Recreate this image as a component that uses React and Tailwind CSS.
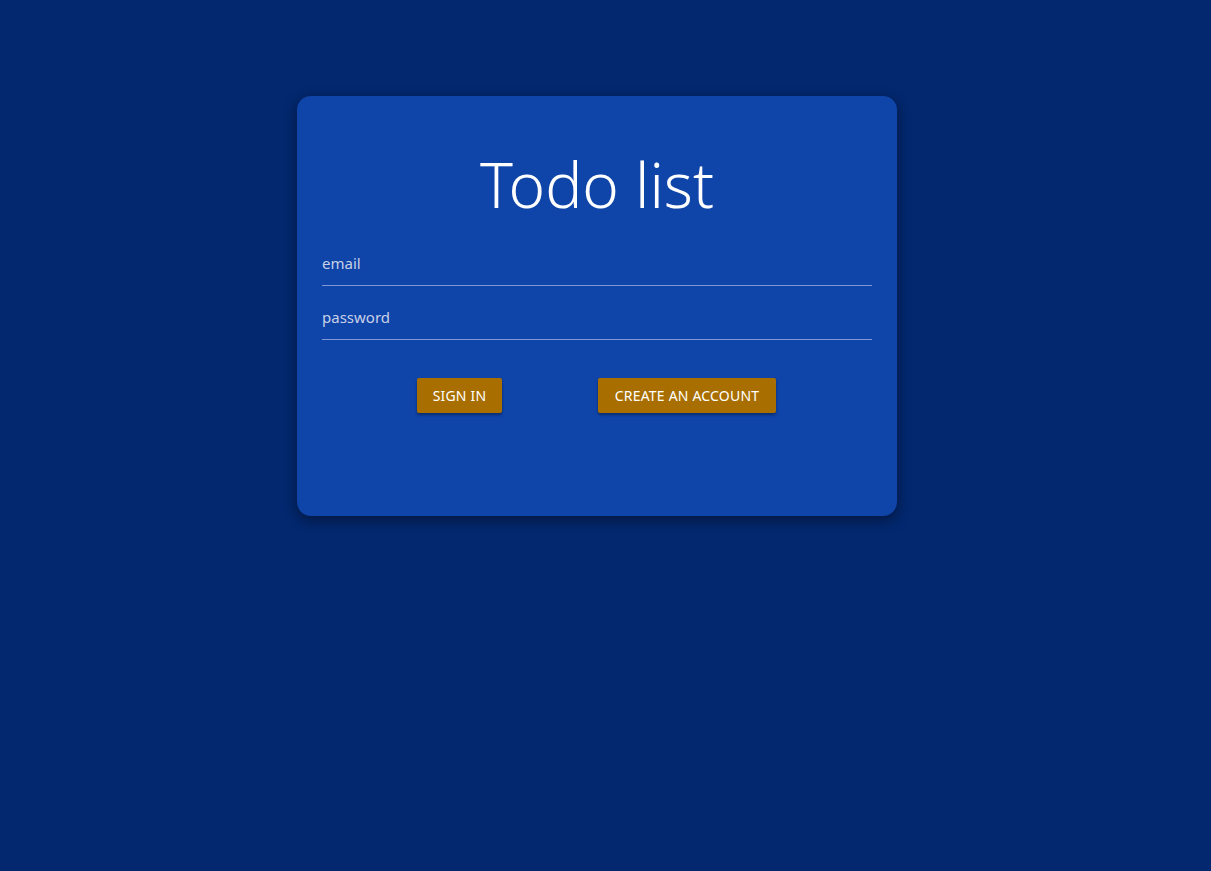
export default function App() {
  return (
    <div className="min-h-screen w-full bg-[#03286f] pr-[17px] pt-[96px]" style={{ fontFamily: '"Noto Sans", "Open Sans", sans-serif' }}>
      <div className="mx-auto flex h-[420px] w-[600px] flex-col rounded-[14px] bg-[#0f44a9] px-[25px] shadow-[0_4px_14px_rgba(0,0,0,0.45)]">
        <h1 className="mt-[48px] text-center text-[62px] font-light leading-[80px] text-white">Todo list</h1>
        <div className="mt-[15px] flex h-[47px] items-center border-b border-[#8099d6] pt-[2px]">
          <span className="text-[15px] text-[#c9d1e6]">email</span>
        </div>
        <div className="mt-[7px] flex h-[47px] items-center border-b border-[#8099d6] pt-[2px]">
          <span className="text-[15px] text-[#c9d1e6]">password</span>
        </div>
        <div className="mt-[38px] flex justify-center gap-[96px] pr-[1px]">
          <button className="h-[35px] w-[85px] rounded-[2px] bg-[#a86f00] text-[14px] uppercase tracking-[0.2px] text-white shadow-[0_2px_3px_rgba(0,0,0,0.35)]">Sign in</button>
          <button className="h-[35px] w-[178px] rounded-[2px] bg-[#a86f00] text-[14px] uppercase tracking-[0.2px] text-white shadow-[0_2px_3px_rgba(0,0,0,0.35)]">Create an account</button>
        </div>
      </div>
    </div>
  );
}
